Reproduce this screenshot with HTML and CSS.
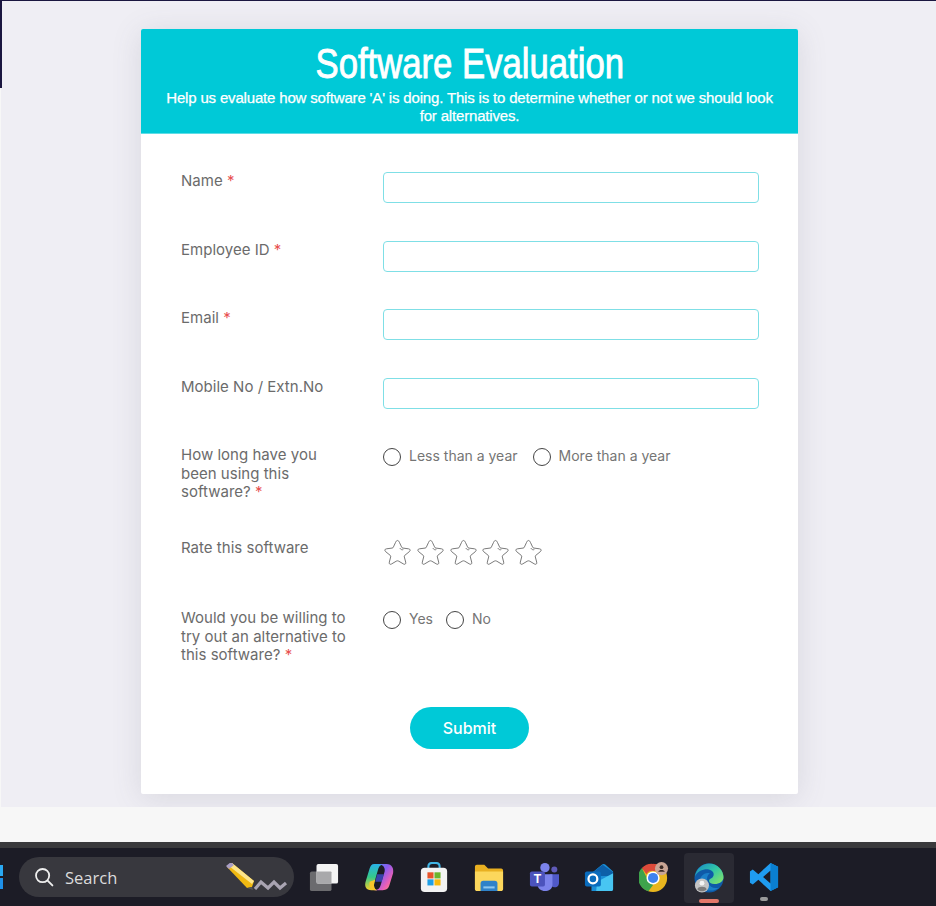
FILE: index.html
```html
<!DOCTYPE html>
<html lang="en">
<head>
<meta charset="utf-8">
<title>Software Evaluation</title>
<link rel="stylesheet" href="styles.css">
</head>
<body>
<div class="edge-top"></div>
<div class="edge-left"></div>
<main class="stage">
  <form class="card">
    <header class="card-head">
      <h1><span class="title">Software Evaluation</span></h1>
      <p>Help us evaluate how software 'A' is doing. This is to determine whether or not we should look for alternatives.</p>
    </header>
    <div class="card-body">
      <div class="row row-input"><label class="lbl">Name <span class="req">*</span></label><input class="field" type="text"></div>
      <div class="row row-input"><label class="lbl">Employee ID <span class="req">*</span></label><input class="field" type="text"></div>
      <div class="row row-input"><label class="lbl">Email <span class="req">*</span></label><input class="field" type="text"></div>
      <div class="row row-input"><label class="lbl">Mobile No / Extn.No</label><input class="field" type="text"></div>
      <div class="row row-radio1"><div class="lbl">How long have you been using this software? <span class="req">*</span></div>
        <div class="radios">
          <span class="radio"><i class="dot"></i>Less than a year</span>
          <span class="radio"><i class="dot"></i>More than a year</span>
        </div>
      </div>
      <div class="row row-rate"><div class="lbl">Rate this software</div>
        <div class="stars">
          <svg class="star" viewBox="0 0 28 28"><use href="#star"/></svg>
          <svg class="star" viewBox="0 0 28 28"><use href="#star"/></svg>
          <svg class="star" viewBox="0 0 28 28"><use href="#star"/></svg>
          <svg class="star" viewBox="0 0 28 28"><use href="#star"/></svg>
          <svg class="star" viewBox="0 0 28 28"><use href="#star"/></svg>
        </div>
      </div>
      <div class="row row-radio2"><div class="lbl">Would you be willing to try out an alternative to this software? <span class="req">*</span></div>
        <div class="radios radios-tight">
          <span class="radio"><i class="dot"></i>Yes</span>
          <span class="radio"><i class="dot"></i>No</span>
        </div>
      </div>
      <div class="actions"><button class="submit" type="button">Submit</button></div>
    </div>
  </form>
</main>
<div class="strip"></div>
<div class="divider"></div>
<footer class="taskbar">
  <svg class="win" viewBox="0 0 4 24" width="4" height="24"><rect x="0" y="0" width="3" height="11" fill="#29a8f2"/><rect x="0" y="13" width="3" height="11" fill="#1e90e8"/></svg>
  <div class="search">
    <svg class="search-ico" viewBox="0 0 20 20" width="20" height="20"><circle cx="8.6" cy="8.6" r="6.6" fill="none" stroke="#eee" stroke-width="1.8"/><path d="M13.6 13.6 L18.4 18.4" stroke="#eee" stroke-width="1.9" stroke-linecap="round"/></svg>
    <span class="search-text">Search</span>
    <svg class="pen" viewBox="0 0 62 30" width="62" height="30">
      <path d="M1 4 L6 0 L28 18 L26 24 L21 25 Z" fill="#f0b912"/>
      <path d="M6 0 L28 18 L26 21 L3 3 Z" fill="#fde58a"/>
      <path d="M0 3 L5 -1 L8 2 L3 6 Z" fill="#a99ec4"/>
      <path d="M21 25 L26 24 L27 27 Z" fill="#555"/>
      <path d="M29 26 L35 19 L42 25 L48 19 L54 25 L60 20" fill="none" stroke="#a9a4b2" stroke-width="3.200"/>
    </svg>
  </div>
  <div class="tray">
    <svg class="tb" viewBox="0 0 32 32"><rect x="1" y="10" width="23" height="21" rx="2" fill="#6b6b6e"/><rect x="8" y="2" width="23" height="21" rx="2" fill="#f4f4f4"/><rect x="8" y="10" width="16" height="13" rx="1" fill="#a9a9ab"/></svg>
    <svg class="tb" viewBox="0 0 32 32"><defs><linearGradient id="cp" x1="0" y1="0" x2="1" y2="1"><stop offset="0" stop-color="#4f8df5"/><stop offset=".4" stop-color="#8a5cf0"/><stop offset=".72" stop-color="#ec5fb4"/><stop offset="1" stop-color="#f7a35a"/></linearGradient><linearGradient id="cq" x1="0" y1="0" x2="0" y2="1"><stop offset="0" stop-color="#28b2ea"/><stop offset=".5" stop-color="#35c98a"/><stop offset="1" stop-color="#f8cf28"/></linearGradient></defs><path d="M11 2 H21 C17 3 16 5 15 8 L11 22 C10 26 11 29 14 30 H8 C2 30 0 26 2 20 L6 7 C7 4 8 2 11 2Z" fill="url(#cq)"/><path d="M6 21 C5 26 7 30 12 30 H14 C11 29 10 26 11 22 L12 19 Z" fill="#f8c72a"/><path d="M15 2 H24 C30 2 32 7 31 12 L27 25 C26 28 24 30 20 30 H11 C15 30 17 28 18 24 L22 10 C23 6 20 2 15 2Z" fill="url(#cp)"/><path d="M14 13 H21 L19 21 H12 Z" fill="#3f4fd8" opacity=".75"/></svg>
    <svg class="tb" viewBox="0 0 32 32"><path d="M10 8 V5 C10 2 12 1 14 1 H18 C20 1 22 2 22 5 V8" fill="none" stroke="#41b4e4" stroke-width="2.2"/><rect x="2" y="6" width="28" height="26" rx="4" fill="#f3f3f3"/><rect x="9" y="11" width="6.5" height="6.5" fill="#e8542a"/><rect x="16.5" y="11" width="6.5" height="6.5" fill="#6cb52d"/><rect x="9" y="18.5" width="6.5" height="6.5" fill="#1f9fe6"/><rect x="16.5" y="18.5" width="6.5" height="6.5" fill="#f8b90b"/></svg>
    <svg class="tb" viewBox="0 0 32 32"><path d="M1 5 C1 4 2 3 3 3 H11 L15 7 H29 C30 7 31 8 31 9 V29 H1 Z" fill="#e9b021"/><path d="M1 10 H31 V29 C31 30 30 31 29 31 H3 C2 31 1 30 1 29 Z" fill="#fcd75c"/><path d="M7 23 C7 21 8 20 10 20 H22 C24 20 25 21 25 23 V31 H7 Z" fill="#2f82c9"/><rect x="10" y="26" width="12" height="2.2" fill="#8ec7ee"/></svg>
    <svg class="tb" viewBox="0 0 32 32"><circle cx="27" cy="8" r="3.200" fill="#5f5ab8"/><circle cx="17" cy="6" r="5" fill="#7b83eb"/><path d="M22 13 H32 V22 C32 26 29 27 27 27 C25 27 23 25 23 22 Z" fill="#5059c9"/><path d="M9 13 H25 V24 C25 29 21 31 17 31 C13 31 9 28 9 24 Z" fill="#7b83eb"/><rect x="1" y="10" width="16" height="16" rx="2" fill="#4b53bc"/><text class="t" x="9" y="22.500">T</text></svg>
    <svg class="tb" viewBox="0 0 32 32"><path d="M8 12 L19 3 C20 2 22 2 23 3 L31 10 V29 C31 30 30 31 29 31 H8 Z" fill="#1a8ed6"/><path d="M8 12 L20 3 L31 11 V15 H8 Z" fill="#0d5fa8"/><path d="M14 21 L31 12 V29 C31 30 30 31 29 31 H13 Z" fill="#48c5f2"/><rect x="1" y="10" width="17" height="16" rx="2" fill="#0a6cbd"/><circle cx="9.500" cy="18" r="4.700" fill="none" stroke="#fff" stroke-width="2.400"/></svg>
    <svg class="tb" viewBox="0 0 32 32"><circle cx="15" cy="17" r="15" fill="#e9b61f"/><path d="M15 2 A15 15 0 0 1 28 9.500 H15 A7.500 7.500 0 0 0 8 13 L3 6.500 A15 15 0 0 1 15 2Z" fill="#dd4a3a"/><path d="M3 6.500 L9 18 L15 24.500 L10 31.200 A15 15 0 0 1 3 6.500Z" fill="#3ea34c"/><circle cx="15" cy="17" r="7" fill="#fff"/><circle cx="15" cy="17" r="5.400" fill="#3d82ee"/><circle cx="24" cy="7" r="7" fill="#c9a595"/><circle cx="24" cy="5.500" r="2" fill="#3a2a25"/><path d="M20.500 10.500 C21 7.800 27 7.800 27.500 10.500Z" fill="#3a2a25"/></svg>
    <div class="tb-active">
      <svg class="tb" viewBox="0 0 32 32"><defs><linearGradient id="ed" x1="0" y1="0" x2="1" y2=".9"><stop offset="0" stop-color="#1a86c8"/><stop offset=".5" stop-color="#2fc4a8"/><stop offset="1" stop-color="#86e468"/></linearGradient></defs><circle cx="16" cy="16" r="15.500" fill="#0f5aa8"/><path d="M1 15 C2 6 9 .5 16 .5 C26 .5 31.500 9 31.500 15 C31.500 20 27 22.500 22 22.500 C18 22.500 16 21 16 19 C16 16 21 17 21 12 C21 8 15 6 11 7 C6 8 2 11 1 15Z" fill="url(#ed)"/><path d="M6 22 C5 14 12 9 17 11 C14 13 13 17 15 21 C17 26 22 28 27 26 C22 31 9 31 6 22Z" fill="#1b7fc8"/><circle cx="8.500" cy="24" r="7.500" fill="#c4c4c4"/><circle cx="8.500" cy="21.500" r="2.600" fill="#f4f4f4"/><path d="M3.500 28 C4 24.500 13 24.500 13.500 28 C11 31 6 31 3.500 28Z" fill="#7c7c7c"/></svg>
      <i class="pill-open"></i>
    </div>
    <div class="tb-cell">
      <svg class="tb" viewBox="0 0 32 32"><path d="M23 1 L31 5 V27 L23 31 L10 19 L4 24 L1 22 V10 L4 8 L10 13Z M23 9 L15 16 L23 23Z" fill="#1f9cf0" fill-rule="evenodd"/><path d="M23 1 L31 5 V27 L23 31Z" fill="#0a7fd0"/></svg>
      <i class="pill-run"></i>
    </div>
  </div>
</footer>
<svg class="defs" width="0" height="0"><defs>
  <g id="star" fill="none" stroke="#666" stroke-width=".9" stroke-linejoin="round">
    <path d="M14 1.500 C15 1.500 15.500 2.500 16 3.500 L18.200 8.200 C18.500 9 18.800 9.300 19.600 9.400 L25.500 10.200 C27.500 10.500 27.600 12 26.200 13.200 L21.500 17 C21 17.500 20.900 18 21.100 18.700 L22.500 24 C23 26 21.500 26.800 20 25.800 L15.300 23 C14.500 22.500 13.500 22.500 12.700 23 L8 25.800 C6.500 26.800 5 26 5.500 24 L6.900 18.700 C7.100 18 7 17.500 6.500 17 L1.800 13.200 C.4 12 .5 10.500 2.500 10.200 L8.400 9.400 C9.200 9.300 9.500 9 9.800 8.200 L12 3.500 C12.500 2.500 13 1.500 14 1.500Z"/>
    <path d="M16.500 9.500 C17.300 11 18.800 11.500 20 11"/>
  </g>
</defs></svg>
</body>
</html>
```
FILE: styles.css
```css
* { box-sizing: border-box; }
html, body { margin: 0; padding: 0; }
body {
  width: 936px;
  height: 906px;
  overflow: hidden;
  background: #f7f7f7;
  font-family: Inter, "Liberation Sans", sans-serif;
  display: flex;
  flex-direction: column;
  position: relative;
}
.edge-top { position: absolute; left: 0; top: 0; width: 100%; height: 1px; background: #1a1640; }
.edge-left { position: absolute; left: 0; top: 0; width: 2px; height: 88px; background: #1a1640; }
.stage {
  height: 807px;
  flex: none;
  background: #efeef4;
  margin-left: 1px;
  padding: 29px 138px 0 140px;
}
.card {
  width: 657px;
  height: 765px;
  background: #fff;
  border-radius: 2px;
  box-shadow: 0 4px 30px rgba(90, 90, 110, .15);
  overflow: hidden;
}
.card-head {
  height: 105px;
  background: #00c9d7;
  color: #fff;
  text-align: center;
  padding: 12px 24px 0;
  border-bottom: 1px solid #5fdde6;
}
.card-head h1 {
  margin: 0;
  font-weight: 400;
  height: 46px;
  display: flex;
  justify-content: center;
}
.title {
  flex: none;
  font-family: "Liberation Sans", sans-serif;
  font-size: 42px;
  line-height: 46px;
  transform: scaleX(.826);
  -webkit-text-stroke: .9px #fff;
}
.card-head p {
  margin: 2px 0 0;
  font-family: "Liberation Sans", sans-serif;
  font-size: 15px;
  line-height: 18px;
  letter-spacing: -.17px;
  -webkit-text-stroke: .25px #fff;
}
.card-body { padding: 38px 39px 0 40px; }
.row { display: flex; align-items: flex-start; }
.row-input { height: 68.5px; }
.row-radio1 { height: 93px; }
.row-rate { height: 70px; }
.row-radio2 { height: 98px; }
.lbl {
  width: 202px;
  padding: .4px 32px 0 0;
  flex: none;
  font-size: 15px;
  line-height: 18.500px;
  letter-spacing: .02px;
  color: #6b6b6b;
}
.req { color: #e85050; }
.field {
  width: 376px;
  height: 31px;
  border: 1px solid #7fdfe6;
  border-radius: 4px;
  background: #fff;
  outline: none;
  padding: 0 8px;
}
.radios { display: flex; gap: 15px; padding-top: 1px; }
.radios-tight { gap: 13px; }
.radio {
  display: flex;
  align-items: center;
  gap: 8px;
  font-size: 14px;
  line-height: 18px;
  color: #757575;
}
.dot {
  width: 18px;
  height: 18px;
  border: 1.300px solid #444;
  border-radius: 50%;
  flex: none;
  position: relative;
  top: 1px;
}
.stars { display: flex; gap: 5.800px; padding-left: 1px; }
.star { width: 27px; height: 27px; display: block; }
.actions { display: flex; justify-content: center; padding-right: 1px; }
.submit {
  width: 119px;
  height: 42px;
  border: 0;
  border-radius: 21px;
  background: #00c9d7;
  color: #fff;
  font-family: Inter, "Liberation Sans", sans-serif;
  font-size: 16px;
  font-weight: 500;
}
.strip { height: 35px; flex: none; background: #f7f7f7; }
.divider { height: 6px; flex: none; background: #3a3a3c; }
.taskbar {
  flex: 1;
  background: #1c1c26;
  display: flex;
  align-items: center;
  position: relative;
}
.win { position: absolute; left: 0; top: 17px; }
.search {
  margin-left: 19px;
  width: 275px;
  height: 40px;
  border-radius: 20px;
  background: #38383e;
  display: flex;
  align-items: center;
  padding-left: 15px;
  flex: none;
}
.search-ico { flex: none; }
.search-text { margin-left: 11px; color: #dcdcdc; font-size: 16.500px; font-family: "Open Sans", sans-serif; flex: 1; }
.pen { flex: none; margin-right: 6px; margin-top: 1px; }
.tray { display: flex; align-items: center; margin-left: 15px; gap: 25px; }
.tb { width: 30px; height: 30px; display: block; flex: none; }
.t { fill: #fff; font-family: "Liberation Sans", sans-serif; font-size: 13px; font-weight: 700; text-anchor: middle; }
.tb-active {
  width: 50px;
  height: 50px;
  margin: 0 -10px;
  border-radius: 4px;
  background: #2a2a33;
  display: flex;
  align-items: center;
  justify-content: center;
  position: relative;
  top: 1px;
}
.pill-open { position: absolute; left: 15px; bottom: 0; width: 20px; height: 4px; border-radius: 2px; background: #e4786a; }
.tb-cell { position: relative; width: 30px; height: 30px; }
.pill-run { position: absolute; left: 11px; bottom: -9px; width: 8px; height: 4px; border-radius: 2px; background: #9a9a9a; }
.defs { position: absolute; }
```
